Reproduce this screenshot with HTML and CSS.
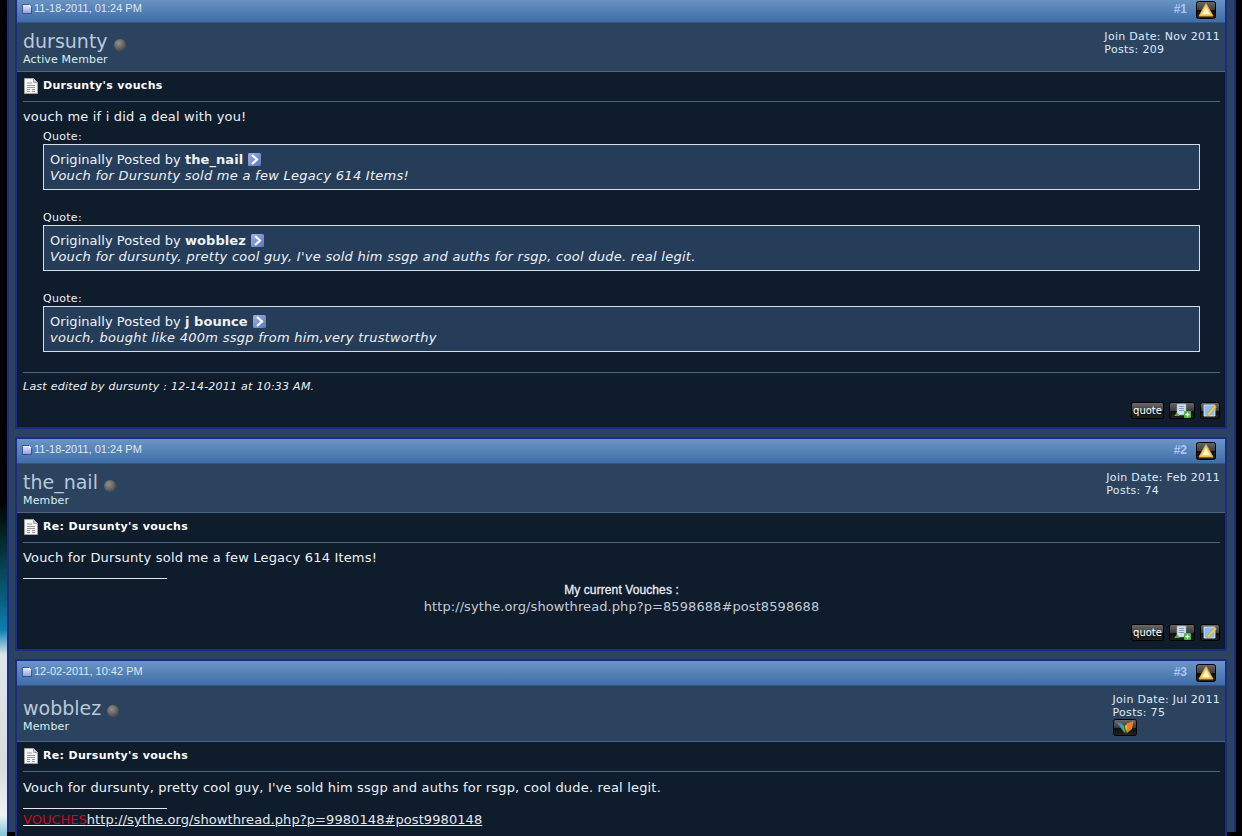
FILE: index.html
```html
<!DOCTYPE html>
<html lang="en">
<head>
  <meta charset="UTF-8">
  <title>Dursunty's vouchs</title>
  <link rel="stylesheet" href="styles.css">
</head>
<body>
  <svg class="defs" width="0" height="0">
    <defs>
      <linearGradient id="btnGloss" x1="0" y1="0" x2="0" y2="1">
        <stop offset="0" stop-color="#6a6a6a"/>
        <stop offset="0.5" stop-color="#3c3c3c"/>
        <stop offset="0.52" stop-color="#0e0e0e"/>
        <stop offset="1" stop-color="#222"/>
      </linearGradient>
      <linearGradient id="pageFill" x1="0" y1="0" x2="0" y2="1">
        <stop offset="0" stop-color="#eef0fb"/>
        <stop offset="1" stop-color="#8e9bd6"/>
      </linearGradient>
      <radialGradient id="dotFill" cx="0.4" cy="0.35" r="0.7">
        <stop offset="0" stop-color="#929292"/>
        <stop offset="1" stop-color="#454545"/>
      </radialGradient>
      <linearGradient id="goFill" x1="0" y1="0" x2="1" y2="1">
        <stop offset="0" stop-color="#9db1e6"/>
        <stop offset="1" stop-color="#5c74bd"/>
      </linearGradient>
      <symbol id="postIcon" viewBox="0 0 10 10">
        <path d="M0.5 0.5H7L9.5 3V9.5H0.5Z" fill="url(#pageFill)" stroke="#2f3f88" stroke-width="0.8"/>
        <path d="M7 0.5V3H9.5" fill="#fff"/>
      </symbol>
      <symbol id="docIcon" viewBox="0 0 14 16">
        <path d="M0.5 0.5H9.5L13.5 4.5V15.5H0.5Z" fill="#f6f6f6" stroke="#a4a4a4"/>
        <path d="M9.5 0.5V4.5H13.5" fill="#d4d4d4" stroke="#a4a4a4"/>
        <path d="M3 5H8M3 7.5H11M3 9.5H11M3 11.5H6M8 11.5H11M3 13.5H6M8 13.5H11" stroke="#999"/>
      </symbol>
      <symbol id="warnBtn" viewBox="0 0 20 18">
        <rect x="0.5" y="0.5" width="19" height="17" rx="2" fill="url(#btnGloss)" stroke="#000"/>
        <path d="M10 2.5L17 15H3Z" fill="#f8d06a" stroke="#e8a53a" stroke-width="1"/>
        <path d="M10 6L13.5 13H6.5Z" fill="#fff6cf"/>
      </symbol>
      <symbol id="goIcon" viewBox="0 0 13 13">
        <rect width="13" height="13" rx="1.5" fill="url(#goFill)"/>
        <path d="M4 2L9 6.5L4 11" fill="none" stroke="#fff" stroke-width="2.2"/>
      </symbol>
      <symbol id="reportBtn" viewBox="0 0 26 17">
        <rect x="0.5" y="0.5" width="25" height="16" rx="2" fill="url(#btnGloss)" stroke="#000"/>
        <path d="M8 2H17V13H8Z" fill="#d5e0ee" stroke="#8fa6c4" stroke-width="0.6"/>
        <path d="M10 4.5H15M10 6.5H15M10 8.5H15" stroke="#7d99bd"/>
        <path d="M5 14L8 10.5L11 14Z" fill="#5aa84a"/>
        <rect x="15" y="9" width="7" height="7" rx="1" fill="#4fb548"/>
        <path d="M18.5 10.5V14.5M16.5 12.5H20.5" stroke="#fff" stroke-width="1.3"/>
      </symbol>
      <symbol id="editBtn" viewBox="0 0 20 17">
        <rect x="0.5" y="0.5" width="19" height="16" rx="2" fill="url(#btnGloss)" stroke="#000"/>
        <path d="M4 3H15V14H4Z" fill="#8dbcec" stroke="#e4effa" stroke-width="0.8"/>
        <path d="M7.5 11.5L14.5 3.5L16.5 5L9.5 13L7 13.5Z" fill="#f2c84e" stroke="#b98a20" stroke-width="0.4"/>
      </symbol>
      <symbol id="msnBtn" viewBox="0 0 24 17">
        <rect x="0.5" y="0.5" width="23" height="16" rx="2" fill="url(#btnGloss)" stroke="#000"/>
        <path d="M3.5 3L9 4.5L11.5 14Z" fill="#3f8fd0"/>
        <path d="M7.5 6L11 6.5L12.5 15Z" fill="#57b04a"/>
        <path d="M12 7L15 4L13 15Z" fill="#e8c43a"/>
        <path d="M14 4.5L20.5 2L19 10L14 14Z" fill="#ee7a2c"/>
      </symbol>
    </defs>
  </svg>

  <div class="page">
    <div class="post post-first">
      <div class="post-head">
        <svg class="post-icon"><use href="#postIcon"/></svg>
        <span class="post-date">11-18-2011, 01:24 PM</span>
        <a class="post-num">#1</a>
        <svg class="warn-btn"><use href="#warnBtn"/></svg>
      </div>
      <div class="user-bar">
        <div class="user-info">
          <div class="user-name">dursunty <svg class="status-dot" viewBox="0 0 12 12"><circle cx="6" cy="6" r="6" fill="url(#dotFill)"/></svg></div>
          <div class="user-rank">Active Member</div>
        </div>
        <div class="user-meta">
          <div>Join Date: Nov 2011</div>
          <div>Posts: 209</div>
        </div>
      </div>
      <div class="post-body">
        <div class="post-title"><svg class="doc-icon"><use href="#docIcon"/></svg>Dursunty's vouchs</div>
        <div class="message">
          <div>vouch me if i did a deal with you!</div>
          <div class="quote">
            <div class="quote-label">Quote:</div>
            <div class="quote-box">
              <div class="quote-by">Originally Posted by <b>the_nail</b> <svg class="go-icon"><use href="#goIcon"/></svg></div>
              <div class="quote-text">Vouch for Dursunty sold me a few Legacy 614 Items!</div>
            </div>
          </div>
          <div class="quote">
            <div class="quote-label">Quote:</div>
            <div class="quote-box">
              <div class="quote-by">Originally Posted by <b>wobblez</b> <svg class="go-icon"><use href="#goIcon"/></svg></div>
              <div class="quote-text">Vouch for dursunty, pretty cool guy, I've sold him ssgp and auths for rsgp, cool dude. real legit.</div>
            </div>
          </div>
          <div class="quote">
            <div class="quote-label">Quote:</div>
            <div class="quote-box">
              <div class="quote-by">Originally Posted by <b>j bounce</b> <svg class="go-icon"><use href="#goIcon"/></svg></div>
              <div class="quote-text">vouch, bought like 400m ssgp from him,very trustworthy</div>
            </div>
          </div>
        </div>
        <div class="edited">Last edited by dursunty : 12-14-2011 at 10:33 AM.</div>
        <div class="post-actions">
          <span class="quote-btn">quote</span>
          <svg class="report-btn"><use href="#reportBtn"/></svg>
          <svg class="edit-btn"><use href="#editBtn"/></svg>
        </div>
      </div>
    </div>

    <div class="post">
      <div class="post-head">
        <svg class="post-icon"><use href="#postIcon"/></svg>
        <span class="post-date">11-18-2011, 01:24 PM</span>
        <a class="post-num">#2</a>
        <svg class="warn-btn"><use href="#warnBtn"/></svg>
      </div>
      <div class="user-bar">
        <div class="user-info">
          <div class="user-name">the_nail <svg class="status-dot" viewBox="0 0 12 12"><circle cx="6" cy="6" r="6" fill="url(#dotFill)"/></svg></div>
          <div class="user-rank">Member</div>
        </div>
        <div class="user-meta">
          <div>Join Date: Feb 2011</div>
          <div>Posts: 74</div>
        </div>
      </div>
      <div class="post-body">
        <div class="post-title"><svg class="doc-icon"><use href="#docIcon"/></svg>Re: Dursunty's vouchs</div>
        <div class="message">
          <div>Vouch for Dursunty sold me a few Legacy 614 Items!</div>
        </div>
        <div class="sig-line"></div>
        <div class="sig-center">
          <div class="sig-head">My current Vouches :</div>
          <a class="sig-url">http://sythe.org/showthread.php?p=8598688#post8598688</a>
        </div>
        <div class="post-actions actions-sig">
          <span class="quote-btn">quote</span>
          <svg class="report-btn"><use href="#reportBtn"/></svg>
          <svg class="edit-btn"><use href="#editBtn"/></svg>
        </div>
      </div>
    </div>

    <div class="post">
      <div class="post-head">
        <svg class="post-icon"><use href="#postIcon"/></svg>
        <span class="post-date">12-02-2011, 10:42 PM</span>
        <a class="post-num">#3</a>
        <svg class="warn-btn"><use href="#warnBtn"/></svg>
      </div>
      <div class="user-bar">
        <div class="user-info">
          <div class="user-name">wobblez <svg class="status-dot" viewBox="0 0 12 12"><circle cx="6" cy="6" r="6" fill="url(#dotFill)"/></svg></div>
          <div class="user-rank">Member</div>
        </div>
        <div class="user-meta">
          <div>Join Date: Jul 2011</div>
          <div>Posts: 75</div>
          <svg class="msn-btn"><use href="#msnBtn"/></svg>
        </div>
      </div>
      <div class="post-body">
        <div class="post-title"><svg class="doc-icon"><use href="#docIcon"/></svg>Re: Dursunty's vouchs</div>
        <div class="message message-low">
          <div>Vouch for dursunty, pretty cool guy, I've sold him ssgp and auths for rsgp, cool dude. real legit.</div>
        </div>
        <div class="sig-line"></div>
        <div class="sig-links"><a class="sig-red">VOUCHES</a><a class="sig-white">http://sythe.org/showthread.php?p=9980148#post9980148</a></div>
      </div>
    </div>
  </div>
</body>
</html>
```

FILE: styles.css
```css
html, body { margin: 0; height: 100%; overflow: hidden; }
body {
  font-family: "DejaVu Sans", Verdana, sans-serif;
  font-size: 13px;
  line-height: 16px;
  color: #edf1f6;
  background: linear-gradient(to bottom, #000 0, #000 500px, #03201e 530px, #0a5f80 600px, #0f7fb0 630px, #dfe6e8 655px, #d8dcdc 770px, #eef3f3 815px, #7fc4d8 836px) no-repeat 0 0 / 7px 100%, #000;
}
.defs { position: absolute; }
svg { display: block; }

.page {
  box-sizing: border-box;
  margin-left: 7px;
  width: 1229px;
  height: 836px;
  padding: 0 7px 0 6px;
  background: #2c4360;
  border-left: 2px solid #1c2a8a;
  border-right: 2px solid #1c2a8a;
}

.post {
  border: 2px solid #1c2a8a;
  background: #0f1c2c;
  margin-bottom: 8px;
}
.post-first { margin-top: -4px; }

.post-head {
  display: flex;
  align-items: center;
  height: 24px;
  padding: 0 9px 0 5px;
  border-bottom: 1px solid #35577f;
  background: linear-gradient(to bottom, #6b96c4, #3f6da8);
}
.post-icon { width: 10px; height: 10px; margin: 0 2px 3px 0; }
.post-date { margin-bottom: 4px; font-family: Tahoma, "Liberation Sans", sans-serif; font-size: 11px; color: #dce6f2; }
.post-num { margin: 0 0 2px auto; font-family: "Liberation Sans", Arial, sans-serif; font-size: 12px; font-weight: bold; color: #aec4f8; }
.warn-btn { width: 20px; height: 18px; margin-left: 9px; }

.user-bar {
  display: flex;
  justify-content: space-between;
  padding: 0 5px 0 6px;
  background: #2c4360;
  border-bottom: 1px solid #4c6484;
}
.user-info { display: flex; flex-direction: column; justify-content: center; box-sizing: border-box; min-height: 48px; padding-top: 1px; }
.user-name { display: flex; align-items: center; gap: 6px; font-size: 19px; line-height: 24px; color: #b9c8da; }
.status-dot { width: 12px; height: 12px; margin-top: 7px; }
.user-rank { font-size: 11px; line-height: 13px; letter-spacing: 0.15px; color: #d8efec; }
.user-meta { padding: 7px 0 5px; font-size: 11px; line-height: 13px; letter-spacing: 0.3px; color: #dcebf5; }
.msn-btn { width: 24px; height: 17px; }

.post-body { padding: 0 5px 8px 6px; }
.post-title {
  box-sizing: border-box;
  display: flex;
  align-items: center;
  height: 30px;
  padding-bottom: 2px;
  font-size: 11px;
  font-weight: bold;
  letter-spacing: 0.32px;
  color: #fff;
  border-bottom: 1px solid #4c6484;
}
.doc-icon { width: 14px; height: 16px; margin: 0 5px 0 1px; }

.message { padding-top: 7px; letter-spacing: 0.18px; }
.message-low { padding-top: 8px; }
.quote { margin: 3px 20px 19px; letter-spacing: 0; }
.quote:last-child { margin-bottom: 20px; }
.quote-label { padding-top: 2px; font-size: 11px; line-height: 14px; letter-spacing: 0.3px; }
.quote-box {
  padding: 7px 6px 5px;
  background: #263d59;
  border: 1px solid #d8dde2;
}
.quote-by { letter-spacing: 0.05px; }
.quote-text { font-style: italic; letter-spacing: 0.27px; }
.go-icon { display: inline-block; width: 13px; height: 13px; margin-left: 1px; vertical-align: -2px; }

.edited {
  padding-top: 6px;
  border-top: 1px solid #4c6484;
  font-size: 11px;
  font-style: italic;
  letter-spacing: 0.25px;
}

.post-actions { display: flex; justify-content: flex-end; align-items: center; gap: 5px; margin-top: 7px; height: 17px; }
.actions-sig { margin-top: 9px; }
.quote-btn {
  box-sizing: border-box;
  width: 33px;
  height: 17px;
  line-height: 16px;
  font-size: 10px;
  text-align: center;
  color: #fff;
  border: 1px solid #000;
  border-radius: 2px;
  background: linear-gradient(to bottom, #6a6a6a, #3c3c3c 50%, #0e0e0e 52%, #222);
}
.report-btn { width: 26px; height: 17px; }
.edit-btn { width: 20px; height: 17px; }

.sig-line { width: 144px; height: 1px; margin-top: 12px; background: #e4e8ee; }
.sig-center { margin-top: 3px; text-align: center; }
.sig-head { margin-bottom: 1px; font-family: "Liberation Sans", Arial, sans-serif; font-size: 12px; letter-spacing: 0.1px; -webkit-text-stroke: 0.3px #e8ecf0; color: #e8ecf0; }
.sig-url { letter-spacing: 0.08px; color: #c3ccd6; }
.sig-links { margin-top: 3px; padding-bottom: 24px; text-decoration: underline; }
.sig-red { color: #cc0a12; }
.sig-white { letter-spacing: 0.08px; color: #e4e8ee; }
```
